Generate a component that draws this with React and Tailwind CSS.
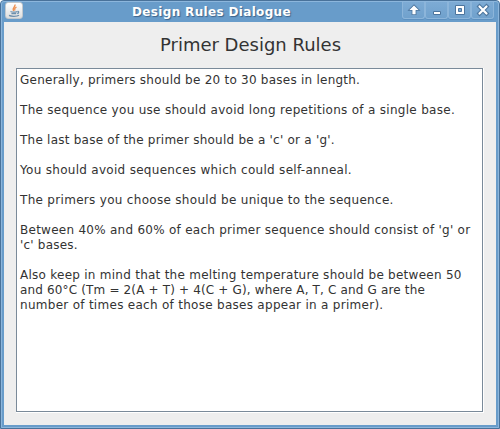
const ARROW = "M8 3.4 L12.6 8 L9.6 8 L9.6 12.2 L6.4 12.2 L6.4 8 L3.4 8 Z";

function Button({ children }) {
  return (
    <div className="h-[17px] w-[23px] rounded-b-[3px] border-x border-b border-[#8cb5da] bg-linear-to-b from-[#7dabd5] to-[#70a1cd] shadow-[0_1px_0_#5c90c0]">
      <svg className="ml-[3px] block" width="16" height="16" viewBox="0 0 16 16">{children}</svg>
    </div>
  );
}

function JavaIcon() {
  return (
    <svg className="block" width="16" height="15" viewBox="0 0 16 15" fill="none">
      <path d="M8.9 1.5 C9.8 4.3 5.6 4.6 7.6 8 M10.5 4 C8.2 5.3 8.4 6 9 7.5" stroke="#ed8f50" strokeWidth="1.4" />
      <path d="M4.5 8.5 C6 9.5 9.7 9.4 11 8.4 M5.4 10.6 H10.2 M11.4 8.6 C13.3 8 12.8 10.3 11.2 10.7" stroke="#6c8fad" strokeWidth="1.3" />
      <path d="M3 12.4 C5 13.6 11 13.6 13 12.2" stroke="#6c8fad" strokeWidth="1.3" />
    </svg>
  );
}

const paragraphs = [
  [["Generally, primers should be 20 to 30 bases in length.", "tracking-[0.24px]"]],
  [["The sequence you use should avoid long repetitions of a single base.", "tracking-[0.295px]"]],
  [["The last base of the primer should be a 'c' or a 'g'.", "tracking-[0.235px]"]],
  [["You should avoid sequences which could self-anneal.", "tracking-[0.295px]"]],
  [["The primers you choose should be unique to the sequence.", "tracking-[0.305px]"]],
  [
    ["Between 40% and 60% of each primer sequence should consist of 'g' or", "tracking-[0.265px]"],
    ["'c' bases.", "tracking-[0.2px]"],
  ],
  [
    ["Also keep in mind that the melting temperature should be between 50", "tracking-[0.26px]"],
    ["and 60°C (Tm = 2(A + T) + 4(C + G), where A, T, C and G are the", "tracking-[0.155px]"],
    ["number of times each of those bases appear in a primer).", "tracking-[0.285px]"],
  ],
];

export default function App() {
  return (
    <div className="h-[429px] w-[500px] overflow-hidden bg-white font-['DejaVu_Sans',sans-serif]">
      <div className="flex h-[429px] w-[500px] flex-col rounded-t-[4px] border border-[#49729a] bg-[#689cca]">
        <div className="flex min-h-0 flex-1 flex-col rounded-t-[3px] border border-[#8cb6dc] px-[2px] pb-[2px]">
          <header className="flex h-5 shrink-0 items-start bg-[#689cca]">
            <div className="ml-px h-[17px] w-[18px] rounded-[3px] border border-[#c2c8cd] bg-linear-to-b from-white to-[#dedede]">
              <JavaIcon />
            </div>
            <h1 className="ml-[109px] w-[270px] pt-[3px] text-[12px] leading-[15px] font-bold tracking-[0.34px] whitespace-nowrap text-white [text-shadow:1px_1px_1px_#3e6389]">
              Design Rules Dialogue
            </h1>
            <div className="flex">
              <Button>
                <path d={ARROW} fill="#fff" stroke="#4c759e" strokeWidth="1.6" paintOrder="stroke" />
              </Button>
              <Button>
                <path d="M4.5 9.5 h7 v3 h-7 z" fill="#fff" stroke="#4c759e" />
              </Button>
              <Button>
                <path d="M3.5 3.5 h9 v9 h-9 z M6.5 6.5 v3 h3 v-3 z" fill="#fff" fillRule="evenodd" stroke="#4c759e" />
              </Button>
              <Button>
                <path d="M4.5 4.5 L11.5 11.5 M11.5 4.5 L4.5 11.5" stroke="#4c759e" strokeWidth="4.2" strokeLinecap="square" />
                <path d="M4.5 4.5 L11.5 11.5 M11.5 4.5 L4.5 11.5" stroke="#fff" strokeWidth="2.2" strokeLinecap="round" />
              </Button>
            </div>
          </header>
          <main className="flex min-h-0 flex-1 flex-col bg-[#eeeeee] px-3 pb-3 text-[#333333]">
            <h2 className="h-[46px] shrink-0 pt-[12px] pl-px text-center text-[18px] leading-[22px] whitespace-nowrap">
              Primer Design Rules
            </h2>
            <div className="min-h-0 flex-1 border-r border-b border-white">
              <div className="h-full border border-[#7a8a99] bg-white pt-[4px] pl-[3px] text-[12px] leading-[15px]">
                {paragraphs.map((lines) => (
                  <p key={lines[0][0]} className="mb-[15px] whitespace-nowrap">
                    {lines.map(([line, tracking]) => (
                      <span key={line} className={`block ${tracking}`}>{line}</span>
                    ))}
                  </p>
                ))}
              </div>
            </div>
          </main>
        </div>
      </div>
    </div>
  );
}
